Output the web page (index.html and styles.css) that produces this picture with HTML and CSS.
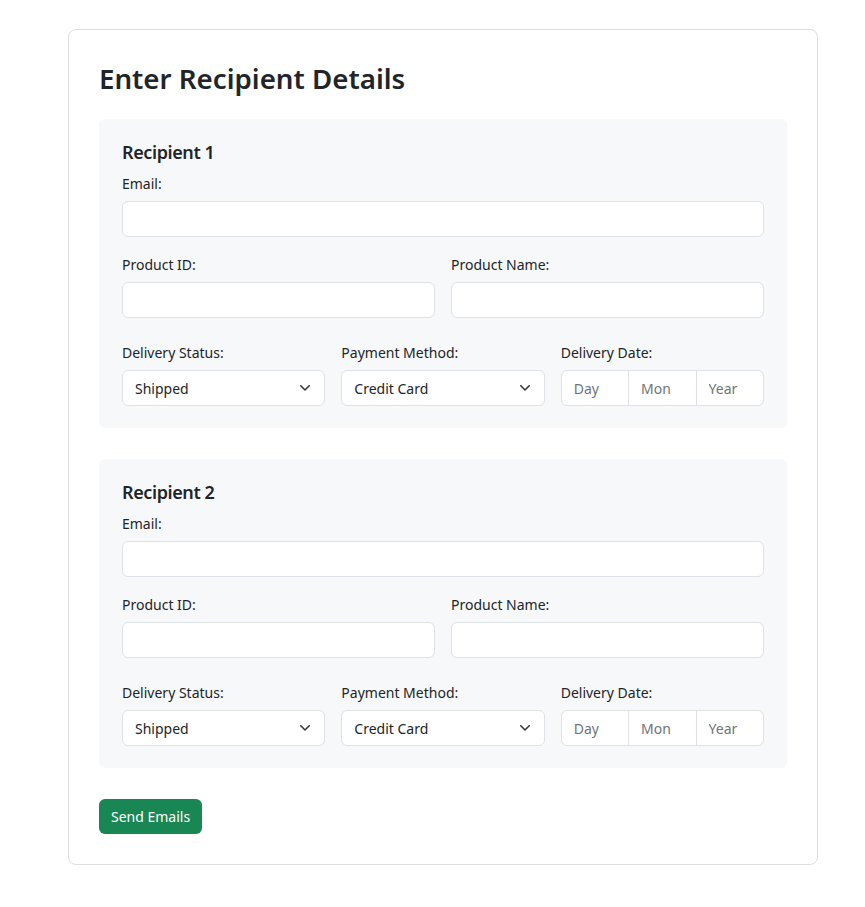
FILE: index.html
```html
<!DOCTYPE html>
<html lang="en">
<head>
<meta charset="utf-8">
<title>Enter Recipient Details</title>
<link rel="stylesheet" href="styles.css">
</head>
<body>
<div class="card">
  <h2 class="title">Enter Recipient Details</h2>

  <section class="recipient">
    <h3 class="recipient-title">Recipient 1</h3>
    <div class="group">
      <label class="label">Email:</label>
      <input class="field" type="email">
    </div>
    <div class="row two">
      <div class="group">
        <label class="label">Product ID:</label>
        <input class="field" type="text">
      </div>
      <div class="group">
        <label class="label">Product Name:</label>
        <input class="field" type="text">
      </div>
    </div>
    <div class="row three">
      <div class="group last">
        <label class="label">Delivery Status:</label>
        <div class="field select"><span>Shipped</span><svg class="chev" width="10" height="6" viewBox="0 0 10 6"><path d="M0.8 0.8L5 5 9.2 0.8" fill="none" stroke="#343a40" stroke-width="1.6" stroke-linecap="round" stroke-linejoin="round"/></svg></div>
      </div>
      <div class="group last">
        <label class="label">Payment Method:</label>
        <div class="field select"><span>Credit Card</span><svg class="chev" width="10" height="6" viewBox="0 0 10 6"><path d="M0.8 0.8L5 5 9.2 0.8" fill="none" stroke="#343a40" stroke-width="1.6" stroke-linecap="round" stroke-linejoin="round"/></svg></div>
      </div>
      <div class="group last">
        <label class="label">Delivery Date:</label>
        <div class="field dates"><input class="date" placeholder="Day"><input class="date" placeholder="Mon"><input class="date" placeholder="Year"></div>
      </div>
    </div>
  </section>

  <section class="recipient">
    <h3 class="recipient-title">Recipient 2</h3>
    <div class="group">
      <label class="label">Email:</label>
      <input class="field" type="email">
    </div>
    <div class="row two">
      <div class="group">
        <label class="label">Product ID:</label>
        <input class="field" type="text">
      </div>
      <div class="group">
        <label class="label">Product Name:</label>
        <input class="field" type="text">
      </div>
    </div>
    <div class="row three">
      <div class="group last">
        <label class="label">Delivery Status:</label>
        <div class="field select"><span>Shipped</span><svg class="chev" width="10" height="6" viewBox="0 0 10 6"><path d="M0.8 0.8L5 5 9.2 0.8" fill="none" stroke="#343a40" stroke-width="1.6" stroke-linecap="round" stroke-linejoin="round"/></svg></div>
      </div>
      <div class="group last">
        <label class="label">Payment Method:</label>
        <div class="field select"><span>Credit Card</span><svg class="chev" width="10" height="6" viewBox="0 0 10 6"><path d="M0.8 0.8L5 5 9.2 0.8" fill="none" stroke="#343a40" stroke-width="1.6" stroke-linecap="round" stroke-linejoin="round"/></svg></div>
      </div>
      <div class="group last">
        <label class="label">Delivery Date:</label>
        <div class="field dates"><input class="date" placeholder="Day"><input class="date" placeholder="Mon"><input class="date" placeholder="Year"></div>
      </div>
    </div>
  </section>

  <button class="btn" type="button">Send Emails</button>
</div>
</body>
</html>
```

FILE: styles.css
```css
* { box-sizing: border-box; }
html, body { margin: 0; padding: 0; background: #fff; }
body {
  font-family: "Noto Sans", "Open Sans", sans-serif;
  color: #212529;
  padding: 29px 0 40px 68px;
}
.card {
  width: 750px;
  border: 1px solid #dedede;
  border-radius: 8px;
  padding: 30px;
}
.title {
  font-size: 27.7px;
  font-weight: 600;
  line-height: 35px;
  margin: 1px 0 23px;
}
.recipient {
  background: #f7f8fa;
  border-radius: 6px;
  padding: 21px 23px 22px;
  margin-bottom: 31px;
}
.recipient-title {
  font-size: 18px;
  font-weight: 600;
  letter-spacing: -0.4px;
  line-height: 24px;
  margin: 0 0 10px;
}
.label {
  display: block;
  font-size: 14px;
  line-height: 20px;
  margin-bottom: 7px;
}
.group { margin-bottom: 18px; }
.group.last { margin-bottom: 0; }
.row { display: grid; gap: 16px; }
.row.two { grid-template-columns: minmax(0, 1fr) minmax(0, 1fr); margin-bottom: 7px; }
.row.three { grid-template-columns: minmax(0, 1fr) minmax(0, 1fr) minmax(0, 1fr); }
.field {
  display: block;
  width: 100%;
  min-width: 0;
  height: 36px;
  border: 1px solid #dee2e6;
  border-radius: 6px;
  background: #fff;
  font: inherit;
  font-size: 14px;
  color: #212529;
  padding: 0 12px;
}
.select {
  display: flex;
  align-items: center;
  justify-content: space-between;
  padding: 0 14px 0 12px;
}
.chev { display: block; flex: none; }
.dates {
  display: flex;
  padding: 0;
  overflow: hidden;
}
.date {
  flex: 1 1 0;
  width: 0;
  min-width: 0;
  border: 0;
  border-right: 1px solid #dee2e6;
  background: transparent;
  font: inherit;
  font-size: 14px;
  padding: 0 12px;
  color: #212529;
}
.date:last-child { border-right: 0; }
.date::placeholder { color: #6c757d; }
.btn {
  display: block;
  background: #198754;
  color: #fff;
  border: 0;
  border-radius: 6px;
  font: inherit;
  font-size: 14px;
  line-height: 21px;
  height: 35px;
  padding: 0 12px;
  margin: 0;
}
```
